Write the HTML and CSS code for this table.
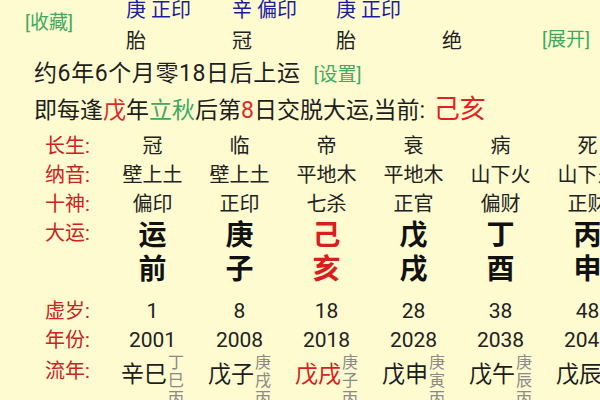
FILE: index.html
```html
<!DOCTYPE html>
<html lang="zh-CN">
<head>
<meta charset="utf-8">
<link rel="stylesheet" href="styles.css">
</head>
<body>
<div class="page">
  <div class="top">
    <span class="link fav">[收藏]</span>
    <span class="gan">庚 正印</span>
    <span class="gan">辛 偏印</span>
    <span class="gan">庚 正印</span>
    <span class="gan"></span>
    <span class="cs">胎</span>
    <span class="cs">冠</span>
    <span class="cs">胎</span>
    <span class="cs">绝</span>
    <span class="link expand">[展开]</span>
  </div>
  <div class="line line1"><span class="spaced">约6年6个月零18日后上运</span><span class="link set">[设置]</span></div>
  <div class="line line2">即每逢<span class="red">戊</span>年<span class="green">立秋</span>后第<span class="red">8</span>日交脱大运,当前: <span class="cur">己亥</span></div>

  <div class="tbl-wrap">
    <div class="tbl">
      <div class="lbl">长生:</div>
      <div class="v">冠</div><div class="v">临</div><div class="v">帝</div><div class="v">衰</div><div class="v">病</div><div class="v">死</div>

      <div class="lbl">纳音:</div>
      <div class="v">壁上土</div><div class="v">壁上土</div><div class="v">平地木</div><div class="v">平地木</div><div class="v">山下火</div><div class="v">山下火</div>

      <div class="lbl">十神:</div>
      <div class="v">偏印</div><div class="v">正印</div><div class="v">七杀</div><div class="v">正官</div><div class="v">偏财</div><div class="v">正财</div>

      <div class="lbl dy-lbl">大运:</div>
      <div class="dy">运<br>前</div><div class="dy">庚<br>子</div><div class="dy red2">己<br>亥</div><div class="dy">戊<br>戌</div><div class="dy">丁<br>酉</div><div class="dy">丙<br>申</div>

      <div class="lbl">虚岁:</div>
      <div class="v num">1</div><div class="v num">8</div><div class="v num">18</div><div class="v num">28</div><div class="v num">38</div><div class="v num">48</div>

      <div class="lbl">年份:</div>
      <div class="v num">2001</div><div class="v num">2008</div><div class="v num">2018</div><div class="v num">2028</div><div class="v num">2038</div><div class="v num">2048</div>

      <div class="lbl ln-lbl">流年:</div>
      <div class="ln"><span class="ln-main">辛巳</span><span class="ln-sub">丁<br>巳<br>丙</span></div>
      <div class="ln"><span class="ln-main">戊子</span><span class="ln-sub">庚<br>戌<br>丙</span></div>
      <div class="ln"><span class="ln-main red2">戊戌</span><span class="ln-sub">庚<br>子<br>丙</span></div>
      <div class="ln"><span class="ln-main">戊申</span><span class="ln-sub">庚<br>寅<br>丙</span></div>
      <div class="ln"><span class="ln-main">戊午</span><span class="ln-sub">庚<br>辰<br>丙</span></div>
      <div class="ln"><span class="ln-main">戊辰</span><span class="ln-sub">庚<br>午<br>丙</span></div>
    </div>
  </div>
</div>
</body>
</html>
```

FILE: styles.css
```css
html, body {
  margin: 0;
  padding: 0;
  background: #fefbd0;
  overflow: hidden;
}
body {
  width: 600px;
  height: 400px;
  font-family: Roboto, "Noto Sans CJK SC", sans-serif;
  color: #1e1e1e;
}
.page {
  width: 600px;
  height: 400px;
  overflow: hidden;
}
.top {
  display: grid;
  grid-template-columns: 126px 106px 104px 106px 1fr;
  grid-template-rows: 21px 21px;
  row-gap: 10px;
  font-size: 20px;
  line-height: 21px;
  padding-top: 1px;
  margin-top: -1px;
}
.gan {
  color: #1c1c9e;
}
.cs {
  color: #222;
}
.link {
  color: #3daa5f;
  font-size: 19px;
}
.fav {
  grid-row: 1 / 3;
  grid-column: 1;
  padding-left: 25px;
  margin-top: 12px;
}
.expand {
  grid-row: 2;
  grid-column: 5;
  justify-self: end;
  margin-right: 10px;
  margin-top: -2px;
}
.top .cs:nth-child(6) { grid-column: 2; grid-row: 2; }
.top .cs:nth-child(7) { grid-column: 3; grid-row: 2; }
.top .cs:nth-child(8) { grid-column: 4; grid-row: 2; }
.top .cs:nth-child(9) { grid-column: 5; grid-row: 2; }
.line {
  padding-left: 34px;
  font-size: 23px;
  line-height: 30px;
  white-space: nowrap;
}
.line1 {
  margin-top: 7px;
}
.spaced {
  letter-spacing: 0.6px;
}
.set {
  margin-left: 13px;
}
.line2 {
  margin-top: 4px;
}
.red { color: #e02a2a; }
.green { color: #3daa5f; }
.cur {
  color: #e02222;
  font-size: 26px;
  margin-left: 3px;
}
.tbl-wrap {
  margin-top: 6px;
  width: 600px;
  overflow: hidden;
}
.tbl {
  display: grid;
  grid-template-columns: 64px repeat(6, 87px);
  width: max-content;
  padding-left: 45px;
  font-size: 20px;
  line-height: 29px;
}
.lbl {
  color: #cc2222;
  font-size: 20px;
}
.v {
  text-align: center;
  color: #222;
}
.num {
  font-size: 21px;
}
.dy {
  text-align: center;
  font-size: 28px;
  font-weight: 700;
  line-height: 34px;
  padding-bottom: 10px;
  color: #111;
}
.dy-lbl {
  line-height: 29px;
}
.red2 { color: #d81e1e; }
.dy.red2 { color: #d81e1e; }
.ln-lbl {
  margin-top: 2px;
}
.ln {
  display: flex;
  justify-content: center;
  align-items: flex-start;
  margin-top: 3px;
}
.ln-main {
  font-size: 23px;
  line-height: 29px;
  margin-top: 2px;
}
.ln-sub {
  display: block;
  font-size: 16px;
  line-height: 18px;
  color: #8a8a8a;
  margin-left: 1px;
  margin-top: -4px;
  text-align: center;
}
```
